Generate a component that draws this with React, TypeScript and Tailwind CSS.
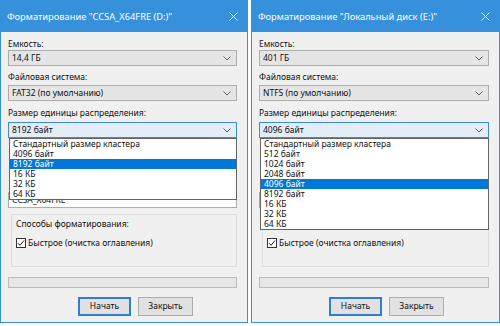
import React from 'react';

interface DialogProps {
  title: string;
  capacity: string;
  fileSystem: string;
  cluster: string;
  label: string;
  options: string[];
  selected: number;
  widthClass: string;
}

const font = { fontFamily: '"Noto Sans", "Open Sans", sans-serif' };

const Chevron = () => (
  <svg width="8" height="5" viewBox="0 0 8 5" className="shrink-0">
    <path d="M0.5 0.5 L4 4 L7.5 0.5" fill="none" stroke="#606060" strokeWidth="1" />
  </svg>
);

const Combo: React.FC<{ value: string; open?: boolean }> = ({ value, open }) => (
  <div
    className={
      open
        ? 'h-[16px] flex items-center justify-between pl-[3px] pr-[5px] border border-[#3c8ad6] bg-[#e3edf7]'
        : 'h-[16px] flex items-center justify-between pl-[3px] pr-[5px] border border-[#adadad] bg-[#e5e5e5]'
    }
  >
    <span className="leading-none">{value}</span>
    <Chevron />
  </div>
);

const FormatDialog: React.FC<DialogProps> = ({
  title,
  capacity,
  fileSystem,
  cluster,
  label,
  options,
  selected,
  widthClass,
}) => (
  <div className={`${widthClass} h-[323px] flex flex-col border border-[#3790dc] bg-[#f0f0f0] text-[8.5px] text-[#111]`}>
    <div className="h-[31px] shrink-0 flex items-center justify-between bg-[#3790dc] pl-[6px] pr-[9px] text-white text-[9.3px]">
      <span>{title}</span>
      <svg width="9" height="9" viewBox="0 0 9 9">
        <path d="M0.5 0.5 L8.5 8.5 M8.5 0.5 L0.5 8.5" stroke="#fff" strokeWidth="1" />
      </svg>
    </div>

    <div className="flex flex-col pl-[7px] pr-[10px]">
      <div className="mt-[6px] h-[12px] leading-[12px]">Емкость:</div>
      <Combo value={capacity} />
      <div className="mt-[5px] h-[12px] leading-[12px] mb-[2px]">Файловая система:</div>
      <Combo value={fileSystem} />
      <div className="mt-[6px] h-[12px] leading-[12px] mb-[3px]">Размер единицы распределения:</div>
      <div className="relative">
        <Combo value={cluster} open />
        <div className="absolute left-[1px] right-0 top-full z-10 flex flex-col border border-[#646464] bg-white">
          {options.map((o, i) => (
            <div
              key={o}
              className={
                i === selected
                  ? 'h-[10px] leading-[10px] pl-[3px] bg-[#0078d7] text-white'
                  : 'h-[10px] leading-[10px] pl-[3px]'
              }
            >
              {o}
            </div>
          ))}
        </div>
      </div>

      {/* restore-defaults button and volume label caption sit under the open list */}
      <div className="mt-[54px] h-[16px] flex items-center pl-[3px] border border-[#adadad] bg-white">{label}</div>

      <div className="mt-[6px] ml-[3px] h-[53px] flex flex-col border border-[#dcdcdc] px-[4px]">
        <div className="mt-[3px] h-[12px] leading-[12px]">Способы форматирования:</div>
        <div className="mt-[7px] flex items-center gap-[2px]">
          <div className="w-[10px] h-[10px] flex items-center justify-center border border-[#333] bg-white">
            <svg width="8" height="8" viewBox="0 0 8 8">
              <path d="M1 4.2 L3 6.3 L7 1.5" fill="none" stroke="#222" strokeWidth="1" />
            </svg>
          </div>
          <span>Быстрое (очистка оглавления)</span>
        </div>
      </div>

      <div className="mt-[10px] h-[11px] border border-[#bcbcbc] bg-[#e6e6e6]" />

      <div className="mt-[9px] flex gap-[7px] pl-[70px]">
        <button className="w-[53px] h-[19px] border-2 border-[#2e7fd0] bg-[#e1e1e1] leading-none">Начать</button>
        <button className="w-[55px] h-[19px] border border-[#adadad] bg-[#e1e1e1] leading-none">Закрыть</button>
      </div>
    </div>
  </div>
);

export default function App() {
  return (
    <div className="w-[500px] h-[326px] bg-white flex gap-[3px] overflow-hidden" style={font}>
      <FormatDialog
        widthClass="w-[248px]"
        title={'Форматирование "CCSA_X64FRE (D:)"'}
        capacity="14,4 ГБ"
        fileSystem="FAT32 (по умолчанию)"
        cluster="8192 байт"
        label="CCSA_X64FRE"
        options={['Стандартный размер кластера', '4096 байт', '8192 байт', '16 КБ', '32 КБ', '64 КБ']}
        selected={2}
      />
      <FormatDialog
        widthClass="w-[249px]"
        title={'Форматирование "Локальный диск (E:)"'}
        capacity="401 ГБ"
        fileSystem="NTFS (по умолчанию)"
        cluster="4096 байт"
        label=""
        options={[
          'Стандартный размер кластера',
          '512 байт',
          '1024 байт',
          '2048 байт',
          '4096 байт',
          '8192 байт',
          '16 КБ',
          '32 КБ',
          '64 КБ',
        ]}
        selected={4}
      />
    </div>
  );
}
